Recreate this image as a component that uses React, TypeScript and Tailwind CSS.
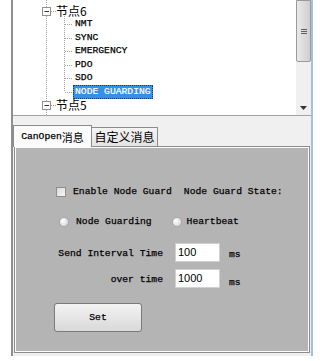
import React from "react";

const mono = { fontFamily: '"Liberation Mono", "DejaVu Sans Mono", monospace', WebkitTextStroke: "0.25px #000" } as React.CSSProperties;
const monoW = { fontFamily: '"Liberation Mono", "DejaVu Sans Mono", monospace', WebkitTextStroke: "0.2px #fff" } as React.CSSProperties;
const cjk = { fontFamily: '"Noto Sans CJK SC", "Noto Sans", sans-serif' };

function TreeLines() {
  const rowsY = [10.75, 24.25, 37.75, 51.25, 64.75, 78.25, 91.75, 105.25];
  const dot = { stroke: "#a0a0a0", strokeWidth: 1, strokeDasharray: "1 1" } as const;
  return (
    <svg className="absolute left-0 top-0" width="285" height="115" viewBox="0 0 285 115">
      <line x1="33.5" y1="0" x2="33.5" y2="115" {...dot} />
      <line x1="51.5" y1="16" x2="51.5" y2={rowsY[6]} {...dot} />
      {rowsY.slice(1, 7).map((y, i) => (
        <line key={i} x1="52" y1={Math.round(y) + 0.5} x2="60" y2={Math.round(y) + 0.5} {...dot} />
      ))}
      {[rowsY[0], rowsY[7]].map((y, i) => {
        const cy = Math.round(y);
        return (
          <g key={i}>
            <line x1="38" y1={cy + 0.5} x2="43" y2={cy + 0.5} {...dot} />
            <rect x="29.5" y={cy - 4 + 0.5} width="8" height="8" fill="#fff" stroke="#919191" />
            <line x1="31.5" y1={cy + 0.5} x2="36" y2={cy + 0.5} stroke="#333" />
          </g>
        );
      })}
    </svg>
  );
}

function Scrollbar() {
  return (
    <div className="flex w-[15px] flex-col bg-[#f0f0f0]">
      <div className="flex h-[62px] flex-col items-center justify-center rounded-b-[2px] border border-[#9a9a9a] bg-gradient-to-r from-[#eaeaea] via-[#dcdcdc] to-[#cfcfcf]">
        <div className="flex flex-col gap-[1px]">
          <div className="h-[1px] w-[6px] bg-[#606060]" />
          <div className="h-[1px] w-[6px] bg-[#606060]" />
          <div className="h-[1px] w-[6px] bg-[#606060]" />
        </div>
      </div>
      <div className="flex-1" />
      <div className="flex h-[14px] items-center justify-center">
        <svg width="7" height="4" viewBox="0 0 7 4">
          <path d="M0 0 H7 L3.5 4 Z" fill="#333" />
        </svg>
      </div>
    </div>
  );
}

function TreeRow({ children, indent }: { children: React.ReactNode; indent: number }) {
  return (
    <div className="flex h-[13.5px] items-center" style={{ paddingLeft: indent }}>
      {children}
    </div>
  );
}

export default function App() {
  const children = ["NMT", "SYNC", "EMERGENCY", "PDO", "SDO"];
  return (
    <div className="flex h-[361px] w-[330px] bg-white pl-[11px]">
      <div className="flex h-[356px] w-[302px] flex-col border-l-2 border-r-2 border-l-[#8f8f8f] border-r-[#a6bfdc] bg-[#f0f0f0]">
        <div className="flex h-[116px] border-b border-[#a3a3a3] bg-white">
          <div className="relative flex-1 overflow-hidden pt-[4px] text-black">
            <TreeLines />
            <div className="relative">
              <TreeRow indent={43}>
                <span className="text-[12px] leading-none" style={cjk}>节点6</span>
              </TreeRow>
              {children.map((c) => (
                <TreeRow key={c} indent={62}>
                  <span className="text-[9.7px] leading-none" style={mono}>{c}</span>
                </TreeRow>
              ))}
              <TreeRow indent={60}>
                <span
                  className="flex h-[13.5px] items-center border border-dotted border-[#1a3a6a] bg-[#3590e8] px-[1px] text-[9.7px] leading-none text-white"
                  style={monoW}
                >
                  NODE GUARDING
                </span>
              </TreeRow>
              <TreeRow indent={43}>
                <span className="text-[12px] leading-none" style={cjk}>节点5</span>
              </TreeRow>
            </div>
          </div>
          <Scrollbar />
        </div>

        <div className="h-[9px]" />

        <div className="relative z-10 flex h-[22px] items-end">
          <div className="flex h-[22px] w-[79px] items-center justify-center border border-b-0 border-[#8c8c8c] bg-[#fbfbfb] pt-[1px]">
            <span className="text-[9.7px] leading-none" style={mono}>CanOpen</span>
            <span className="text-[11px] leading-none" style={cjk}>消息</span>
          </div>
          <div className="mb-[1px] flex h-[19px] w-[66px] items-center justify-center border border-b-0 border-l-0 border-[#8c8c8c] bg-gradient-to-b from-[#f4f4f4] to-[#e4e4e4]">
            <span className="text-[12px] leading-none" style={cjk}>自定义消息</span>
          </div>
        </div>

        <div className="-mt-[1px] mx-[1px] flex h-[207px] flex-col border border-[#8c8c8c] bg-[#fbfbfb] p-[1px]">
          <div className="flex flex-1 flex-col bg-[#b4b4b4] text-black">
            <div className="mt-[37px] flex h-[14px] items-center pl-[40px]">
              <div className="h-[10px] w-[10px] border border-[#8e8e8e] bg-gradient-to-br from-[#d8d8d8] to-[#f8f8f8]" />
              <span className="ml-[7px] text-[9.7px] leading-none" style={mono}>Enable Node Guard</span>
              <span className="ml-[12px] text-[9.7px] leading-none" style={mono}>Node Guard State:</span>
            </div>
            <div className="mt-[16px] flex h-[14px] items-center pl-[43px]">
              <div className="h-[10px] w-[10px] rounded-full border border-[#a8a8a8] bg-[radial-gradient(circle_at_35%_35%,#ffffff,#cfcfcf)]" />
              <span className="ml-[7px] text-[9.7px] leading-none" style={mono}>Node Guarding</span>
              <div className="ml-[20px] h-[10px] w-[10px] rounded-full border border-[#a8a8a8] bg-[radial-gradient(circle_at_35%_35%,#ffffff,#cfcfcf)]" />
              <span className="ml-[5px] text-[9.7px] leading-none" style={mono}>Heartbeat</span>
            </div>
            <div className="mt-[14px] flex h-[19px] items-center">
              <span className="w-[147px] pt-[2px] text-right text-[9.7px] leading-none" style={mono}>Send Interval Time</span>
              <div className="ml-[12px] flex h-[19px] w-[45px] items-center border border-[#d0d0d0] bg-white pl-[2px] text-[11px] leading-none" style={{ fontFamily: '"Liberation Sans", Arial, sans-serif' }}>
                100
              </div>
              <span className="ml-[9px] pt-[4px] text-[9.7px] leading-none" style={mono}>ms</span>
            </div>
            <div className="mt-[7px] flex h-[19px] items-center">
              <span className="w-[147px] pt-[2px] text-right text-[9.7px] leading-none" style={mono}>over time</span>
              <div className="ml-[12px] flex h-[19px] w-[45px] items-center border border-[#d0d0d0] bg-white pl-[2px] text-[11px] leading-none" style={{ fontFamily: '"Liberation Sans", Arial, sans-serif' }}>
                1000
              </div>
              <span className="ml-[9px] pt-[8px] text-[9.7px] leading-none" style={mono}>ms</span>
            </div>
            <div className="mt-[15px] pl-[38px]">
              <div className="flex h-[29px] w-[88px] items-center justify-center rounded-[3px] border border-[#7a7a7a] bg-gradient-to-b from-[#f3f3f3] to-[#d9d9d9]">
                <span className="text-[9.7px] leading-none" style={mono}>Set</span>
              </div>
            </div>
          </div>
        </div>
      </div>
    </div>
  );
}
